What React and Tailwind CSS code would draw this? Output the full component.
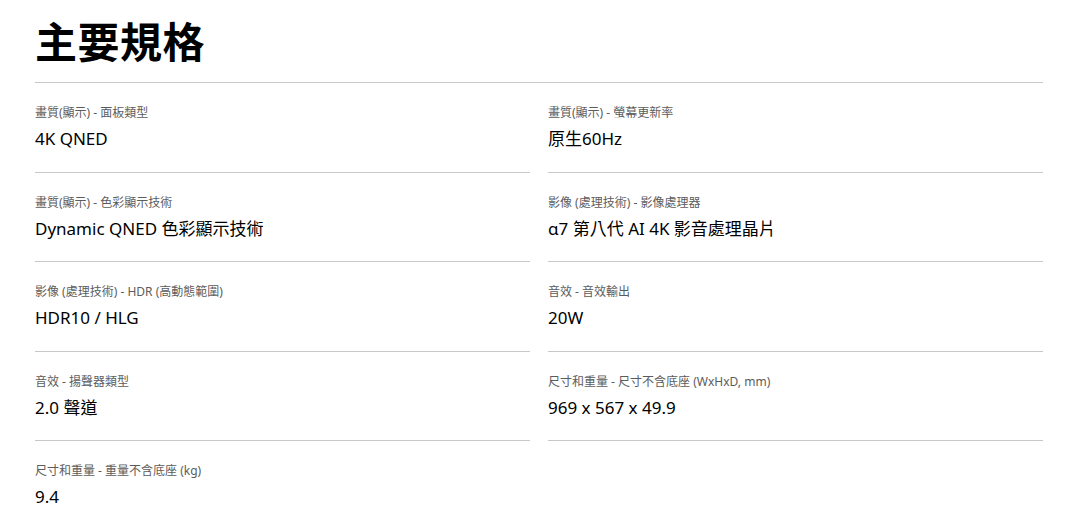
const specs = [
  { label: '畫質(顯示) - 面板類型', value: '4K QNED' },
  { label: '畫質(顯示) - 螢幕更新率', value: '原生60Hz' },
  { label: '畫質(顯示) - 色彩顯示技術', value: 'Dynamic QNED 色彩顯示技術' },
  { label: '影像 (處理技術) - 影像處理器', value: 'α7 第八代 AI 4K 影音處理晶片' },
  { label: '影像 (處理技術) - HDR (高動態範圍)', value: 'HDR10 / HLG' },
  { label: '音效 - 音效輸出', value: '20W' },
  { label: '音效 - 揚聲器類型', value: '2.0 聲道' },
  { label: '尺寸和重量 - 尺寸不含底座 (WxHxD, mm)', value: '969 x 567 x 49.9' },
  { label: '尺寸和重量 - 重量不含底座 (kg)', value: '9.4' },
]

export default function App() {
  return (
    <div className="min-h-screen bg-white px-[35px] pt-[13px] font-['Noto_Sans','Noto_Sans_CJK_TC',sans-serif] text-black">
      <div className="w-[1008px]">
        <h1 className="pb-[11px] text-[42px] font-bold leading-[58px] tracking-[0.5px]">主要規格</h1>
        <div className="border-t border-[#c8c8c6]" />
        <div className="grid grid-cols-2 gap-x-[18px]">
          {specs.map((s, i) => (
            <div
              key={s.label}
              className={`flex flex-col gap-[4px] pt-[21px] pb-[20.5px] ${i < specs.length - 1 ? 'border-b border-[#c8c8c6]' : ''}`}
            >
              <span className="text-[12px] leading-[18px] text-[#5c5c5c]">{s.label}</span>
              <span className="text-[17px] leading-[25px]">{s.value}</span>
            </div>
          ))}
        </div>
      </div>
    </div>
  )
}
